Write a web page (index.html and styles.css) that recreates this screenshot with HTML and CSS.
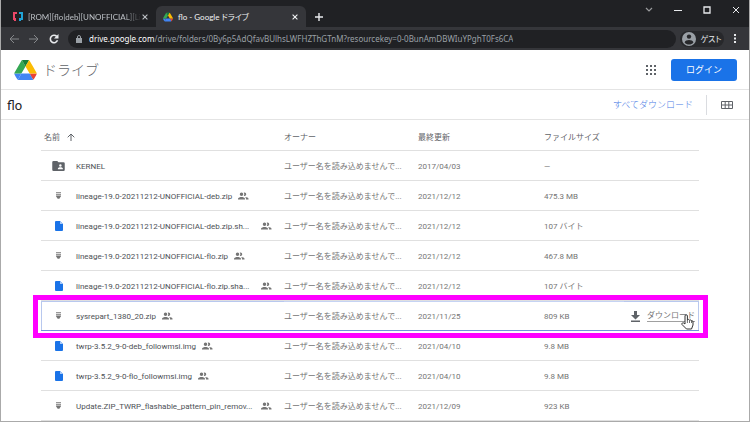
FILE: index.html
```html
<!DOCTYPE html>
<html lang="ja">
<head>
<meta charset="utf-8">
<title>flo - Google ドライブ</title>
<link rel="stylesheet" href="styles.css">
</head>
<body>
<svg class="defs" aria-hidden="true">
  <symbol id="drive" viewBox="0 0 87.3 78">
    <path fill="#4285f4" d="M6.6 66.9l3.9 6.6c.8 1.4 2 2.500 3.300 3.300l13.700-23.800H0c0 1.500.4 3.100 1.200 4.500z"/>
    <path fill="#34a853" d="M43.650 25L29.900 1.200c-1.350.8-2.500 1.900-3.300 3.300L1.200 48.500C.4 49.900 0 51.500 0 53h27.500z"/>
    <path fill="#ea4335" d="M73.550 76.800c1.350-.8 2.500-1.900 3.300-3.300l1.600-2.750 7.650-13.250c.8-1.400 1.200-2.950 1.200-4.500H59.800l5.850 11.500z"/>
    <path fill="#188038" d="M43.650 25L57.400 1.200C56.050.4 54.500 0 52.900 0H34.400c-1.600 0-3.150.45-4.500 1.200z"/>
    <path fill="#4285f4" d="M59.800 53H27.500L13.750 76.800c1.350.8 2.900 1.200 4.500 1.200h50.800c1.600 0 3.150-.45 4.500-1.200z"/>
    <path fill="#fbbc04" d="M73.400 26.500L60.700 4.500c-.8-1.400-1.950-2.500-3.300-3.300L43.650 25 59.800 53h27.450c0-1.550-.4-3.100-1.200-4.500z"/>
  </symbol>
  <symbol id="people" viewBox="0 0 24 24">
    <path d="M9 13.750c-2.340 0-7 1.170-7 3.500V19h14v-1.750c0-2.330-4.660-3.500-7-3.500zM9 12a3.500 3.500 0 1 0 0-7 3.500 3.500 0 0 0 0 7zM16.040 13.810C17.200 14.650 18 15.770 18 17.250V19h5v-1.750c0-2.020-3.500-3.170-6.960-3.440zM15 12a3.500 3.500 0 1 0 0-7c-.54 0-1.040.13-1.500.35a5 5 0 0 1 0 6.300c.46.220.96.350 1.500.350z"/>
  </symbol>
  <symbol id="zip" viewBox="0 0 6 8">
    <path d="M0 0h6v1H0zM0 2h6v1H0zM0 4h6v1L4 8H2L0 5z"/>
  </symbol>
  <symbol id="file" viewBox="0 0 16 20">
    <path fill="#1a73e8" d="M2 0h8l6 6v12a2 2 0 0 1-2 2H2a2 2 0 0 1-2-2V2a2 2 0 0 1 2-2z"/>
    <path fill="#a9cbfa" d="M10 0l6 6h-6z"/>
  </symbol>
  <symbol id="folder" viewBox="0 0 20 16">
    <path fill="#5f6368" d="M2 0h6l2 2h8a2 2 0 0 1 2 2v10a2 2 0 0 1-2 2H2a2 2 0 0 1-2-2V2a2 2 0 0 1 2-2z"/>
    <path fill="#fff" d="M13 5a2 2 0 1 1 0 4 2 2 0 0 1 0-4zM9 13v-1c0-1.300 2.700-2 4-2s4 .7 4 2v1z"/>
  </symbol>
  <symbol id="close" viewBox="0 0 10 10">
    <path fill="none" stroke="currentColor" stroke-width="1.800" d="M1 1l8 8M9 1L1 9"/>
  </symbol>
</svg>

<div class="window">
  <header class="tabs">
    <div class="tab">
      <svg class="tab-icon" viewBox="0 0 10 10" fill="none" stroke-width="2"><path stroke="#ec4868" d="M4 1H1v6h1v2"/><path stroke="#20a4d8" d="M6 1h3v6H7v2"/></svg>
      <span class="tab-title fade">[ROM][flo|deb][UNOFFICIAL][Line</span>
      <button class="tab-close" aria-label="タブを閉じる"><svg><use href="#close"/></svg></button>
    </div>
    <div class="tab active">
      <svg class="tab-icon"><use href="#drive"/></svg>
      <span class="tab-title">flo - Google ドライブ</span>
      <button class="tab-close" aria-label="タブを閉じる"><svg><use href="#close"/></svg></button>
    </div>
    <button class="new-tab" aria-label="新しいタブ"><svg viewBox="0 0 8 8" fill="none" stroke="currentColor"><path stroke-width="1.400" d="M4 0v8M0 4h8"/></svg></button>
    <div class="controls">
      <button aria-label="タブを検索"><svg viewBox="0 0 8 8" fill="none" stroke="#999a9c"><path stroke-width="1.200" d="M1 2l3 3 3-3"/></svg></button>
      <button aria-label="最小化"><svg viewBox="0 0 8 8"><path fill="currentColor" d="M0 4h8v1H0z"/></svg></button>
      <button aria-label="最大化"><svg viewBox="0 0 8 8" fill="none" stroke="currentColor"><path d="M1 1h6v6H1z" stroke-width="1.300"/></svg></button>
      <button aria-label="閉じる"><svg viewBox="0 0 8 8" fill="none" stroke="currentColor"><path d="M1 1l6 6M7 1L1 7"/></svg></button>
    </div>
  </header>

  <nav class="toolbar">
    <button class="nav dim" aria-label="戻る"><svg viewBox="0 0 10 10" fill="none" stroke="currentColor"><path d="M10 5H1M5 1L1 5l4 4"/></svg></button>
    <button class="nav dim" aria-label="進む"><svg viewBox="0 0 10 10" fill="none" stroke="currentColor"><path d="M0 5h9M5 1l4 4-4 4"/></svg></button>
    <button class="nav" aria-label="再読み込み"><svg viewBox="0 0 10 10"><path fill="none" stroke="currentColor" stroke-width="1.600" d="M8.500 6.300A3.700 3.700 0 1 1 7.700 2.400"/><path fill="currentColor" d="M9.500 0v4.500H5z"/></svg></button>
    <div class="address">
      <svg class="lock" viewBox="0 0 6 8"><path fill="#9aa0a6" d="M0 3h6v5H0z"/><path fill="none" stroke="#9aa0a6" d="M1.500 3V2a1.500 1.500 0 0 1 3 0v1"/></svg>
      <span class="url"><b>drive.google.com</b>/drive/folders/0By6p5AdQfavBUlhsLWFHZThGTnM?resourcekey=0-0BunAmDBWIuYPghT0Fs6CA</span>
    </div>
    <button class="guest"><svg viewBox="0 0 14 14"><circle cx="7" cy="7" r="7" fill="#9aa0a6"/><circle cx="7" cy="4.600" r="2.200" fill="#27282b"/><path fill="#27282b" d="M2.600 10.500C3 8.700 5 8 7 8s4 .7 4.400 2.500C10.300 12 8.800 12.500 7 12.500S3.700 12 2.600 10.500z"/></svg><span>ゲスト</span></button>
    <button class="menu" aria-label="メニュー"><svg viewBox="0 0 2 9"><path fill="#e8eaed" d="M0 0h2v2H0zM0 3.500h2v2H0zM0 7h2v2H0z"/></svg></button>
  </nav>

  <div class="masthead">
    <svg class="logo"><use href="#drive"/></svg>
    <span class="product">ドライブ</span>
    <button class="apps" aria-label="アプリ"><svg viewBox="0 0 10 10" fill="#5f6368"><path d="M0 0h2v2H0zM4 0h2v2H4zM8 0h2v2H8zM0 4h2v2H0zM4 4h2v2H4zM8 4h2v2H8zM0 8h2v2H0zM4 8h2v2H4zM8 8h2v2H8z"/></svg></button>
    <button class="login">ログイン</button>
  </div>

  <div class="subhead">
    <h1>flo</h1>
    <button class="all">すべてダウンロード</button>
    <button class="grid" aria-label="グリッド表示"><svg viewBox="0 0 12 8" fill="none" stroke="#5f6368"><path d="M.5.5h11v7H.5zM0 4h12M4.200 0v8M7.800 0v8"/></svg></button>
  </div>

  <main>
    <table>
      <colgroup><col class="c-name"><col class="c-owner"><col class="c-date"><col class="c-size"><col></colgroup>
      <thead>
        <tr><th>名前<svg class="sort" viewBox="0 0 8 8" fill="none" stroke="#5f6368"><path d="M4 8V1M.7 4.300L4 1l3.300 3.300"/></svg></th><th>オーナー</th><th>最終更新</th><th>ファイルサイズ</th><th></th></tr>
      </thead>
      <tbody>
        <tr><td><div class="name"><svg class="i-folder"><use href="#folder"/></svg><span>KERNEL</span></div></td><td>ユーザー名を読み込めませんで...</td><td>2017/04/03</td><td>—</td><td></td></tr>
        <tr><td><div class="name"><svg class="i-zip"><use href="#zip"/></svg><span>lineage-19.0-20211212-UNOFFICIAL-deb.zip</span><svg class="people"><use href="#people"/></svg></div></td><td>ユーザー名を読み込めませんで...</td><td>2021/12/12</td><td>475.3 MB</td><td></td></tr>
        <tr><td><div class="name"><svg class="i-file"><use href="#file"/></svg><span class="long">lineage-19.0-20211212-UNOFFICIAL-deb.zip.sh...</span><svg class="people"><use href="#people"/></svg></div></td><td>ユーザー名を読み込めませんで...</td><td>2021/12/12</td><td>107 バイト</td><td></td></tr>
        <tr><td><div class="name"><svg class="i-zip"><use href="#zip"/></svg><span>lineage-19.0-20211212-UNOFFICIAL-flo.zip</span><svg class="people"><use href="#people"/></svg></div></td><td>ユーザー名を読み込めませんで...</td><td>2021/12/12</td><td>467.8 MB</td><td></td></tr>
        <tr><td><div class="name"><svg class="i-file"><use href="#file"/></svg><span class="long">lineage-19.0-20211212-UNOFFICIAL-flo.zip.sha...</span><svg class="people"><use href="#people"/></svg></div></td><td>ユーザー名を読み込めませんで...</td><td>2021/12/12</td><td>107 バイト</td><td></td></tr>
        <tr class="selected"><td><div class="name"><svg class="i-zip"><use href="#zip"/></svg><span>sysrepart_1380_20.zip</span><svg class="people"><use href="#people"/></svg></div><div class="marker"></div></td><td>ユーザー名を読み込めませんで...</td><td>2021/11/25</td><td>809 KB</td><td><a class="download" href="#"><svg class="i-down" viewBox="0 0 9 11"><path fill="#5f6368" d="M3 0h3v4h3L4.500 8.500 0 4h3zM0 9.500h9V11H0z"/></svg><span>ダウンロード</span><svg class="cursor" viewBox="0 0 13 16"><path fill="#fff" stroke="#333" d="M4 10V2a1.200 1.200 0 0 1 2.400 0v4l1-.6 1.200.8 1.200-.3.900 1 1.300.2V11l-1.500 4H5.500L1 10.500C.5 9 1.800 8.500 2.700 9z"/><path stroke="#333" stroke-width=".7" d="M6.400 6v3M8.500 6.500V9M10.500 7v2"/></svg></a></td></tr>
        <tr><td><div class="name"><svg class="i-file"><use href="#file"/></svg><span>twrp-3.5.2_9-0-deb_followmsi.img</span><svg class="people"><use href="#people"/></svg></div></td><td>ユーザー名を読み込めませんで...</td><td>2021/04/10</td><td>9.8 MB</td><td></td></tr>
        <tr><td><div class="name"><svg class="i-file"><use href="#file"/></svg><span>twrp-3.5.2_9-0-flo_followmsi.img</span><svg class="people"><use href="#people"/></svg></div></td><td>ユーザー名を読み込めませんで...</td><td>2021/04/10</td><td>9.8 MB</td><td></td></tr>
        <tr><td><div class="name"><svg class="i-zip"><use href="#zip"/></svg><span class="long">Update.ZIP_TWRP_flashable_pattern_pin_remov...</span><svg class="people"><use href="#people"/></svg></div></td><td>ユーザー名を読み込めませんで...</td><td>2021/12/09</td><td>923 KB</td><td></td></tr>
      </tbody>
    </table>
  </main>
</div>
</body>
</html>
```
FILE: styles.css
```css
* { box-sizing: border-box; }
body { margin: 0; background: #fff; font-family: Roboto, "Noto Sans CJK JP", sans-serif; font-size: 9px; color: #5f6368; }
button { border: 0; padding: 0; margin: 0; background: none; font: inherit; color: inherit; display: flex; align-items: center; justify-content: center; }
svg { display: block; flex: none; }
.defs { position: absolute; width: 0; height: 0; }
.window { height: 100vh; overflow: hidden; border: solid #aaa; border-width: 0 1px 1px; }

.tabs { display: flex; align-items: flex-end; height: 27px; margin: 0 -1px; padding-left: 6px; background: #202124; color: #e8eaed; font-family: Lato, "Noto Sans CJK JP", sans-serif; }
.tab { display: flex; align-items: center; width: 150px; height: 21px; padding: 0 7px; color: #bdc1c6; }
.tab.active { background: #35363a; color: #f1f3f4; border-radius: 6px 6px 0 0; }
.tab-icon { width: 10px; height: 10px; margin-right: 5px; }
.tab-title { flex: 1; min-width: 0; white-space: nowrap; font-size: 8px; line-height: 14px; font-feature-settings: "palt"; }
.fade { overflow: hidden; mask-image: linear-gradient(90deg, #000 85%, transparent); }
.tab-close { width: 8px; height: 8px; }
.tab-close svg { width: 6px; height: 6px; }
.new-tab { width: 25px; height: 21px; }
.new-tab svg { width: 8px; height: 8px; }
.controls { display: flex; align-self: flex-start; margin-left: auto; }
.controls button { width: 29px; height: 19px; }
.controls svg { width: 8px; height: 8px; }

.toolbar { display: flex; align-items: center; height: 23px; margin: 0 -1px; padding: 0 8px 0 4px; background: #35363a; color: #e8eaed; font-family: "Noto Sans", "Noto Sans CJK JP", sans-serif; }
.nav { width: 20px; height: 20px; }
.nav svg { width: 10px; height: 10px; }
.dim { color: #85878a; }
.address { flex: 1; display: flex; align-items: center; min-width: 0; height: 18px; margin-left: 4px; padding: 0 8px; border-radius: 9px; background: #202124; }
.lock { width: 6px; height: 8px; }
.url { margin-left: 7px; overflow: hidden; white-space: nowrap; font-size: 8px; color: #9aa0a6; }
.url b { font-weight: 400; color: #fff; }
.guest { gap: 4px; width: 44px; height: 16px; margin-left: 4px; border-radius: 8px; background: #27282b; font-size: 8px; font-feature-settings: "palt"; }
.guest svg { width: 14px; height: 14px; }
.menu { width: 14px; height: 18px; margin-left: 4px; }
.menu svg { width: 2px; height: 9px; }

.masthead { display: flex; align-items: center; height: 40px; padding: 0 12px 0 13px; border-bottom: 1px solid #e4e4e4; }
.logo { width: 23px; height: 20px; }
.product { flex: 1; margin-left: 6px; font-size: 14px; font-weight: 300; line-height: 20px; }
.apps { width: 20px; height: 20px; margin-right: 10px; }
.apps svg { width: 10px; height: 10px; }
.login { width: 66px; height: 22px; border-radius: 3px; background: #1a73e8; color: #fff; font-size: 9px; }

.subhead { display: flex; align-items: center; height: 30px; padding: 0 16px 0 6px; border-bottom: 1px solid #e4e4e4; }
h1 { flex: 1; margin: 0; font-family: Lato, sans-serif; font-size: 13px; line-height: 18px; font-weight: 400; color: #202124; }
.all { color: #4b7be5; font-weight: 300; }
.grid { height: 20px; margin-left: 13px; padding-left: 14px; border-left: 1px solid #dadce0; }
.grid svg { width: 12px; height: 8px; }

main { padding: 0 50px 0 40px; }
table { width: 100%; table-layout: fixed; border-collapse: separate; border-spacing: 0; font-size: 8px; }
.c-name { width: 243px; }
.c-owner { width: 134px; }
.c-date { width: 126px; }
.c-size { width: 80px; }
th, td { height: 30px; padding: 2px 0 0; border-bottom: 1px solid #e0e0e0; white-space: nowrap; text-align: left; font-weight: 400; line-height: 14px; vertical-align: middle; color: #757575; }
thead th { height: 31px; padding-top: 6px; color: #5f6368; }
th:first-child { padding-left: 3px; }
.sort { display: inline-block; width: 8px; height: 8px; margin-left: 7px; vertical-align: -1px; }
.name { display: grid; grid-template-columns: 35px auto auto; justify-content: start; align-items: center; color: #4d5156; }
.name svg { margin-bottom: 2px; }
.name > svg:first-child { justify-self: center; }
.long { width: 179px; }
.i-folder { width: 13px; height: 10px; }
.i-zip { width: 5px; height: 7px; fill: #757575; }
.i-file { width: 8px; height: 10px; }
.people { width: 12px; height: 12px; margin-left: 5px; fill: #757575; }

.selected { position: relative; }
.selected td { border-bottom-color: #7292dc; box-shadow: inset 0 1px #c5d3f3; }
.selected td:first-child { box-shadow: inset 1px 1px #b8c8ee; }
.selected td:last-child { box-shadow: inset -1px 1px #b8c8ee; }
.marker { position: absolute; inset: -6px -9px -7px -8px; border: 5px solid #f0f; pointer-events: none; }
.download { position: relative; display: flex; align-items: center; justify-content: flex-end; gap: 7px; padding-right: 4px; color: #757575; text-decoration: none; }
.download span { border-bottom: 1px solid #a0a0a0; line-height: 10px; }
.i-down { width: 9px; height: 11px; }
.cursor { position: absolute; right: 5px; top: 3px; width: 13px; height: 16px; }
```
